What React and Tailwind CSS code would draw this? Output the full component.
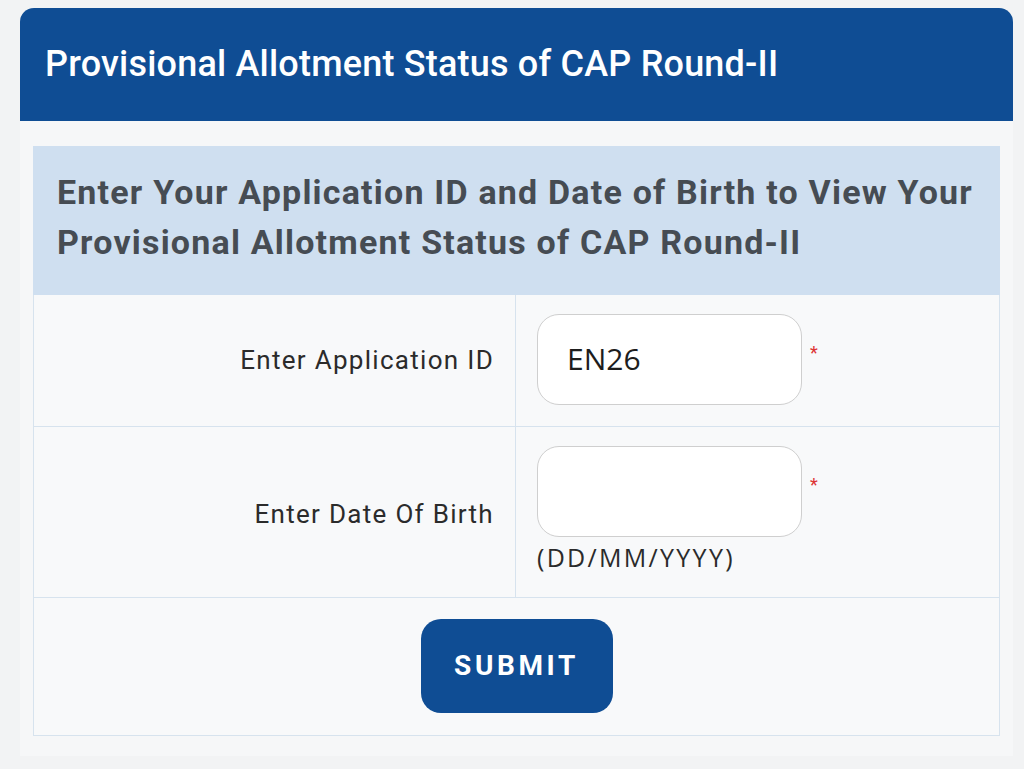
export default function App() {
  return (
    <div className="min-h-[769px] w-full bg-[#f2f3f4] pt-[8px] font-['Roboto',sans-serif]">
      <div className="mx-[20px] w-[993px]">
        <div className="flex h-[113px] items-center rounded-t-[14px] bg-[#0f4d94] pl-[25px] pb-[2px]">
          <h1 className="text-[36px] font-medium tracking-[0.2px] text-white">
            Provisional Allotment Status of CAP Round-II
          </h1>
        </div>
        <div className="bg-[#f6f7f8] px-[13px] pt-[25px] pb-[20px]">
          <div className="h-[149px] bg-[#cfdff0] px-[24px] pt-[21px]">
            <p className="text-[34px] leading-[50px] font-bold tracking-[1.2px] text-[#464c53]">
              Enter Your Application ID and Date of Birth to View Your
              <br />
              Provisional Allotment Status of CAP Round-II
            </p>
          </div>
          <div className="border-x border-b border-[#d7e3ee] bg-[#f8f9fa]">
            <div className="grid grid-cols-[482px_1fr] border-b border-[#d7e3ee]">
              <div className="flex h-[131px] items-center justify-end border-r border-[#d7e3ee] pr-[21px]">
                <span className="text-[26px] tracking-[1.3px] text-[#2b2b2b]">Enter Application ID</span>
              </div>
              <div className="flex items-start pt-[19px] pl-[21px]">
                <div className="flex h-[91px] w-[265px] items-center rounded-[22px] border border-[#cfcfcf] bg-white pl-[29px] pb-[2px]">
                  <span className="font-['Open_Sans',sans-serif] text-[30px] text-[#1d1d1d]">EN26</span>
                </div>
                <span className="ml-[8px] mt-[30px] text-[18px] leading-none text-[#d33]">*</span>
              </div>
            </div>
            <div className="grid grid-cols-[482px_1fr] border-b border-[#d7e3ee]">
              <div className="flex h-[170px] items-center justify-end border-r border-[#d7e3ee] pr-[21px] pt-[4px]">
                <span className="text-[26px] tracking-[1.3px] text-[#2b2b2b]">Enter Date Of Birth</span>
              </div>
              <div className="flex flex-col pt-[19px] pl-[21px]">
                <div className="flex items-start">
                  <div className="h-[91px] w-[265px] rounded-[22px] border border-[#cfcfcf] bg-white"></div>
                  <span className="ml-[8px] mt-[30px] text-[18px] leading-none text-[#d33]">*</span>
                </div>
                <span className="mt-[3px] font-['Open_Sans',sans-serif] text-[25px] leading-[34px] tracking-[2.3px] text-[#2b2b2b]">
                  (DD/MM/YYYY)
                </span>
              </div>
            </div>
            <div className="flex h-[137px] items-start justify-center pt-[21px]">
              <button className="h-[94px] w-[192px] rounded-[20px] bg-[#0f4d94] text-[28px] font-bold tracking-[3.6px] text-white">
                SUBMIT
              </button>
            </div>
          </div>
        </div>
      </div>
    </div>
  );
}
